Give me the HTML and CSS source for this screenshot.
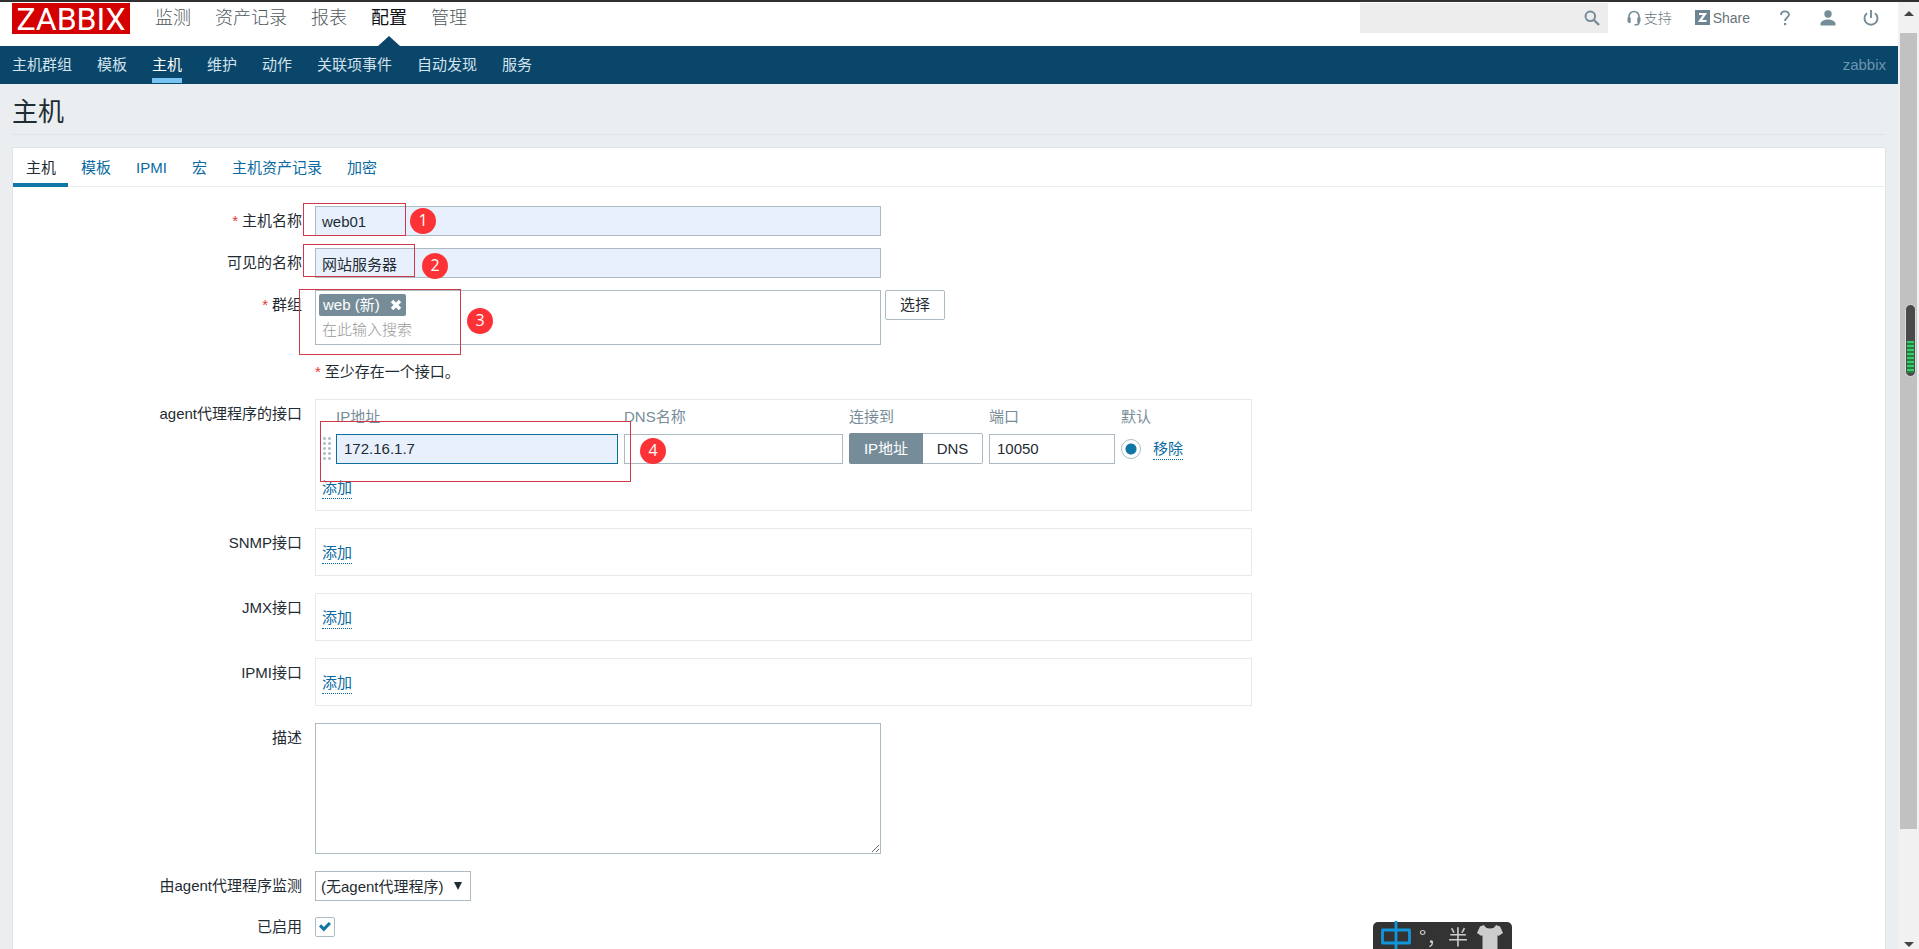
FILE: index.html
```html
<!DOCTYPE html>
<html lang="zh-CN">
<head>
<meta charset="utf-8">
<title>主机</title>
<link rel="stylesheet" href="styles.css">
</head>
<body>
<div class="page">
  <header class="top">
    <a class="logo" href="#">ZABBIX</a>
    <nav class="menu">
      <a href="#">监测</a>
      <a href="#">资产记录</a>
      <a href="#">报表</a>
      <a href="#" class="current">配置</a>
      <a href="#">管理</a>
    </nav>
    <div class="search">
      <input type="text" aria-label="搜索">
      <button type="button" aria-label="搜索">
        <svg width="16" height="16" viewBox="0 0 16 16"><circle cx="6.3" cy="6.3" r="4.8" fill="none" stroke="#768d99" stroke-width="2"/><path d="M10 10l5 5" stroke="#768d99" stroke-width="2.4"/></svg>
      </button>
    </div>
    <a class="tool support" href="#">
      <svg width="14" height="16" viewBox="0 0 14 16"><path d="M2 10.500V6.500a5 5 0 0 1 10 0v4" fill="none" stroke="#768d99" stroke-width="1.700"/><path d="M0.500 7.500h3.200v5.500H2.500a2 2 0 0 1-2-2zM13.500 7.500h-3.200v5.500h1.200a2 2 0 0 0 2-2z" fill="#768d99"/><path d="M12 12.500c0 1.500-1 2.200-2.500 2.200H7.500" fill="none" stroke="#768d99" stroke-width="1.500"/></svg>
      支持</a>
    <a class="tool share" href="#">
      <svg width="15" height="15" viewBox="0 0 15 15"><path d="M0 0h15v15H0z" fill="#6d8592"/><path d="M4 4h6L5 11H11.500" fill="none" stroke="#fff" stroke-width="2.200"/></svg>
      Share</a>
    <a class="tool help" href="#" aria-label="帮助">
      <svg width="10" height="16" viewBox="0 0 10 16"><path d="M1 5C1 0.300 9 0.300 9 4.600 9 7.500 5 7.500 5 11" fill="none" stroke="#768d99" stroke-width="1.900"/><path d="M4 13h2.200v2.200H4z" fill="#768d99"/></svg>
    </a>
    <a class="tool user" href="#" aria-label="用户">
      <svg width="16" height="16" viewBox="0 0 16 16"><circle cx="8" cy="4" r="3.700" fill="#768d99"/><path d="M0.500 15.500v-2C1.500 10.500 5 9.500 8 9.500s6.500 1 7.500 4v2z" fill="#768d99"/></svg>
    </a>
    <a class="tool power" href="#" aria-label="退出">
      <svg width="16" height="16" viewBox="0 0 16 16"><path d="M4 3.200a6.500 6.500 0 1 0 8 0M8 0v8" fill="none" stroke="#768d99" stroke-width="1.900"/></svg>
    </a>
  </header>

  <nav class="subnav">
    <a href="#">主机群组</a>
    <a href="#">模板</a>
    <a href="#" class="current">主机</a>
    <a href="#">维护</a>
    <a href="#">动作</a>
    <a href="#">关联项事件</a>
    <a href="#">自动发现</a>
    <a href="#">服务</a>
    <span class="server">zabbix</span>
  </nav>

  <main class="content">
    <h1>主机</h1>
    <div class="card">
      <nav class="tabs">
        <a href="#" class="current">主机</a>
        <a href="#">模板</a>
        <a href="#">IPMI</a>
        <a href="#">宏</a>
        <a href="#">主机资产记录</a>
        <a href="#">加密</a>
      </nav>

      <form class="form">
        <div class="row">
          <label class="required" for="host">主机名称</label>
          <div class="field">
            <input class="box wide filled" id="host" type="text" value="web01">
            <span class="frame frame-1"></span><span class="mark mark-1">1</span>
          </div>
        </div>
        <div class="row">
          <label for="visible">可见的名称</label>
          <div class="field">
            <input class="box wide filled" id="visible" type="text" value="网站服务器">
            <span class="frame frame-2"></span><span class="mark mark-2">2</span>
          </div>
        </div>
        <div class="row">
          <label class="required" for="groups">群组</label>
          <div class="field inline">
            <div class="multiselect wide">
              <span class="tag">web (新)
                <button type="button" aria-label="移除 web"><svg width="12" height="12" viewBox="0 0 12 12"><path d="M2 2l8 8M10 2l-8 8" stroke="#fff" stroke-width="3.400"/></svg></button>
              </span>
              <input id="groups" type="text" placeholder="在此输入搜索">
            </div>
            <button class="select-button" type="button">选择</button>
            <span class="frame frame-3"></span><span class="mark mark-3">3</span>
          </div>
        </div>
        <div class="row">
          <span></span>
          <p class="note required">至少存在一个接口。</p>
        </div>

        <div class="row group">
          <span class="caption">agent代理程序的接口</span>
          <div class="field">
            <div class="panel agent">
              <table class="interfaces">
                <colgroup><col class="c-grip"><col class="c-ip"><col class="c-dns"><col class="c-connect"><col class="c-port"><col class="c-default"><col></colgroup>
                <thead>
                  <tr><th></th><th>IP地址</th><th>DNS名称</th><th>连接到</th><th>端口</th><th colspan="2">默认</th></tr>
                </thead>
                <tbody>
                  <tr>
                    <td><span class="grip"></span></td>
                    <td><input class="box filled active" type="text" value="172.16.1.7" aria-label="IP地址"></td>
                    <td><input class="box" type="text" aria-label="DNS名称"></td>
                    <td><div class="segments"><button type="button" class="on">IP地址</button><button type="button">DNS</button></div></td>
                    <td><input class="box" type="text" value="10050" aria-label="端口"></td>
                    <td><input class="radio" type="radio" checked aria-label="默认"></td>
                    <td><a class="dotted" href="#">移除</a></td>
                  </tr>
                </tbody>
              </table>
              <a class="dotted" href="#">添加</a>
            </div>
            <span class="frame frame-4"></span><span class="mark mark-4">4</span>
          </div>
        </div>
        <div class="row group">
          <span class="caption">SNMP接口</span>
          <div class="panel"><a class="dotted" href="#">添加</a></div>
        </div>
        <div class="row group">
          <span class="caption">JMX接口</span>
          <div class="panel"><a class="dotted" href="#">添加</a></div>
        </div>
        <div class="row group">
          <span class="caption">IPMI接口</span>
          <div class="panel"><a class="dotted" href="#">添加</a></div>
        </div>
        <div class="row group">
          <label for="description">描述</label>
          <textarea class="wide" id="description"></textarea>
        </div>
        <div class="row group">
          <label for="proxy">由agent代理程序监测</label>
          <div class="picker">
            <select id="proxy"><option>(无agent代理程序)</option></select>
          </div>
        </div>
        <div class="row short">
          <label for="enabled">已启用</label>
          <input class="check" id="enabled" type="checkbox" checked>
        </div>
      </form>
    </div>
  </main>
</div>

<div class="scrollbar" aria-hidden="true">
  <span class="arrow up"></span>
  <span class="thumb"><span class="meter"><span class="level"></span></span></span>
  <span class="arrow down"></span>
</div>

<div class="ime">
  <svg width="30" height="28" viewBox="0 0 30 28"><path d="M1.500 9h27v13h-27zM15 0v28" fill="none" stroke="#1296db" stroke-width="2.800" stroke-linejoin="round"/></svg>
  <span class="ime-punct">°，</span>
  <span class="ime-half">半</span>
  <svg width="26" height="24" viewBox="0 0 26 24"><path d="M7 0c1 2.500 3 3.500 6 3.500S18 2.500 19 0l4 1.500L26 8l-4.500 3L20.500 10v14h-15V10l-1 1L0 8l3-6.500z" fill="#ccc"/></svg>
</div>
</body>
</html>
```
FILE: styles.css
```css
* { box-sizing: border-box; }

body {
  margin: 0;
  height: 100vh;
  display: flex;
  overflow: hidden;
  border-top: 2px solid #322f2f;
  background: #ebeef0;
  color: #1f2c33;
  font: 15px/20px "Liberation Sans", "Noto Sans CJK SC", sans-serif;
}

a { color: #0a6aa1; text-decoration: none; }

input, button, select, textarea {
  font: inherit;
  color: inherit;
  margin: 0;
  outline: none;
}

button { padding: 0; border: 0; background: none; }
svg { display: block; flex: none; }

.page { flex: 1; min-width: 0; }

/* Header */
.top {
  display: flex;
  align-items: flex-start;
  height: 44px;
  padding: 1px 19px 0 12px;
  background: #fff;
}

.logo {
  width: 118px;
  height: 31px;
  background: #d40000;
  color: #fff;
  font: 32px/32px Roboto, sans-serif;
  text-align: center;
}

.menu { display: flex; gap: 24px; margin-left: 25px; }

.menu a {
  position: relative;
  height: 43px;
  color: #50585d;
  font-size: 18px;
  font-weight: 300;
  line-height: 30px;
}

.menu .current { color: #0f1215; font-weight: 400; }

.menu .current::after {
  content: "";
  position: absolute;
  left: 7px;
  bottom: 0;
  border: solid transparent;
  border-width: 0 11px 10px;
  border-bottom-color: #0a466a;
}

.search {
  display: flex;
  align-items: center;
  width: 248px;
  height: 30px;
  margin-left: auto;
  padding-right: 8px;
  background: #ededed;
}

.search input {
  flex: 1;
  min-width: 0;
  height: 30px;
  border: 0;
  background: none;
}

.tool {
  display: flex;
  align-items: center;
  gap: 3px;
  height: 29px;
  color: #69747b;
  font-size: 14px;
  font-weight: 300;
}

.support { margin-left: 19px; }
.share { margin-left: 23px; }
.help { margin-left: 30px; }
.user { margin-left: 30px; }
.power { margin-left: 27px; }

.subnav {
  display: flex;
  gap: 25px;
  height: 38px;
  padding: 0 12px;
  background: #0a466a;
}

.subnav a {
  height: 37px;
  border-bottom: 5px solid transparent;
  color: #d3e3ed;
  line-height: 38px;
}

.subnav .current { color: #fff; border-color: #78c5f3; }
.server { margin-left: auto; color: #6d95ad; line-height: 37px; }

/* Content */
.content { padding: 0 12px; }

h1 {
  margin: 0 0 12px;
  height: 51px;
  border-bottom: 1px solid #dfe4e7;
  font-size: 26px;
  font-weight: 400;
  line-height: 56px;
}

.card { border: 1px solid #dfe4e7; background: #fff; }

.tabs { display: flex; height: 39px; border-bottom: 1px solid #ebeef0; }

.tabs a {
  height: 39px;
  padding: 0 12px 0 13px;
  border-bottom: 4px solid transparent;
  line-height: 40px;
}

.tabs .current { color: #1f2c33; border-color: #0f76a6; }

.form {
  display: flex;
  flex-direction: column;
  gap: 12px;
  padding: 19px 0 40px;
}

.row {
  display: grid;
  grid-template-columns: 289px minmax(0, 937px);
  column-gap: 13px;
}

.row.group { margin-top: 5px; }
.row > label, .caption { line-height: 30px; text-align: right; }
.row.short { margin-top: 4px; }
.row.short > label { line-height: 20px; }

.required::before { content: "*"; margin-right: 4px; color: #e33734; }

.field { position: relative; min-width: 0; }
.inline { display: flex; align-items: flex-start; gap: 4px; }
.wide { width: 100%; max-width: 566px; }

.box {
  display: block;
  height: 30px;
  padding: 0 7px;
  border: 1px solid #acbbc2;
  background: #fff;
}

.box.wide { padding: 0 6px; }
.filled { background: #e8f0fe; }
.box.active { border-color: #0f6f9c; }

.multiselect {
  height: 55px;
  padding: 3px;
  border: 1px solid #acbbc2;
}

.tag {
  display: flex;
  align-items: center;
  gap: 10px;
  width: max-content;
  height: 22px;
  padding: 0 4px;
  border-radius: 2px;
  background: #768d99;
  color: #fff;
}

.multiselect input {
  display: block;
  width: 100%;
  height: 26px;
  padding: 0 3px;
  border: 0;
  background: none;
}

.multiselect input::placeholder { color: #999; font-weight: 300; opacity: 1; }

.select-button {
  width: 60px;
  height: 30px;
  border: 1px solid #acbbc2;
  border-radius: 2px;
}

.note { margin: 0; height: 25px; line-height: 29px; }

.panel { padding: 13px 6px 11px; border: 1px solid #e6eaec; }
.panel.agent { padding: 0 6px 11px; }

.dotted {
  display: inline-block;
  border-bottom: 1px dotted #0a6aa1;
  line-height: 21px;
  vertical-align: top;
}

.interfaces {
  table-layout: fixed;
  width: 100%;
  margin-bottom: 13px;
  border-collapse: collapse;
}

.interfaces th {
  height: 33px;
  padding: 0;
  color: #768d99;
  font-weight: 400;
  text-align: left;
}

.interfaces td { height: 30px; padding: 0 6px 0 0; }
.interfaces td .box { width: 100%; }
.interfaces td .dotted { vertical-align: middle; }
.c-grip { width: 14px; }
.c-ip { width: 288px; }
.c-dns { width: 225px; }
.c-connect { width: 140px; }
.c-port { width: 132px; }
.c-default { width: 32px; }

.grip {
  display: block;
  width: 10px;
  height: 25px;
  background: radial-gradient(circle, #b3c0c7 1px, transparent 2px) 0 0 / 5px 5px;
}

.segments { display: flex; height: 31px; }

.segments button {
  flex: 1 1 50px;
  border: 1px solid #acbbc2;
  border-left: 0;
  border-radius: 0 2px 2px 0;
}

.segments .on {
  flex: 0 0 74px;
  border: 0;
  border-radius: 2px 0 0 2px;
  background: #768d99;
  color: #fff;
}

.radio {
  appearance: none;
  display: block;
  width: 20px;
  height: 20px;
  border: 1px solid #acbbc2;
  border-radius: 50%;
  background: radial-gradient(circle, #0f76a6 5px, #fff 6px);
}

textarea {
  display: block;
  height: 131px;
  border: 1px solid #acbbc2;
  background: #fff;
}

.picker { position: relative; width: 156px; }

.picker select {
  appearance: none;
  display: block;
  width: 100%;
  height: 30px;
  padding: 1px 5px 0;
  border: 1px solid #acbbc2;
  border-radius: 0;
  background: #fff;
}

.picker::after {
  content: "";
  position: absolute;
  top: 11px;
  right: 9px;
  border: solid transparent;
  border-width: 8px 4px 0;
  border-top-color: #1f2c33;
  pointer-events: none;
}

.check {
  appearance: none;
  width: 20px;
  height: 20px;
  padding: 3px;
  border: 1px solid #acbbc2;
  border-radius: 2px;
}

.check:checked::after {
  content: "";
  display: block;
  width: 12px;
  height: 12px;
  background: #0f76a6;
  clip-path: polygon(0 45%, 18% 28%, 40% 50%, 82% 8%, 100% 25%, 40% 88%);
}

/* Numbered callouts over the fields */
.frame { position: absolute; border: 1px solid #d0394a; pointer-events: none; }
.frame-1 { left: -12px; top: -3px; width: 103px; height: 33px; }
.frame-2 { left: -12px; top: -4px; width: 112px; height: 33px; }
.frame-3 { left: -16px; top: -1px; width: 162px; height: 66px; }
.frame-4 { left: 5px; top: 22px; width: 311px; height: 61px; }

.mark {
  position: absolute;
  width: 26px;
  height: 26px;
  border-radius: 50%;
  background: #fd3237;
  color: #fff;
  font: 16px/25px "Open Sans", sans-serif;
  text-align: center;
}

.mark-1 { left: 95px; top: 2px; }
.mark-2 { left: 107px; top: 5px; }
.mark-3 { left: 152px; top: 18px; }
.mark-4 { left: 325px; top: 39px; }

/* Window scrollbar */
.scrollbar {
  display: flex;
  flex-direction: column;
  align-items: center;
  width: 21px;
  padding: 9px 0 2px;
  background: #f1f1f1;
}

.arrow { border: solid transparent; }
.up { border-width: 0 5px 5px; border-bottom-color: #444; }
.down { margin-top: auto; border-width: 5px 5px 0; border-top-color: #444; }

.thumb {
  display: flex;
  justify-content: flex-end;
  width: 17px;
  height: 85%;
  margin-top: 17px;
  padding: 271px 1px 0;
  background: #c1c1c1;
}

.meter {
  display: flex;
  align-items: flex-end;
  width: 11px;
  height: 73px;
  padding: 3px 1px;
  border: 1px solid #ddd;
  border-radius: 6px;
  background: #4a4a4a;
}

.level {
  flex: 1;
  height: 32px;
  background: repeating-linear-gradient(#32d067 0 2px, #2a7a45 2px 4px);
}

/* Input-method bar */
.ime {
  position: fixed;
  right: 407px;
  bottom: 0;
  display: flex;
  align-items: flex-end;
  width: 139px;
  height: 27px;
  padding: 0 9px 0 8px;
  border-radius: 5px 5px 0 0;
  background: #333;
  color: #ccc;
  font: 20px/24px "Noto Sans CJK SC", sans-serif;
}

.ime-punct { width: 30px; padding-left: 8px; white-space: nowrap; }
.ime-half { width: 30px; padding-left: 7px; }
.ime > svg:last-child { margin-left: auto; }
```
